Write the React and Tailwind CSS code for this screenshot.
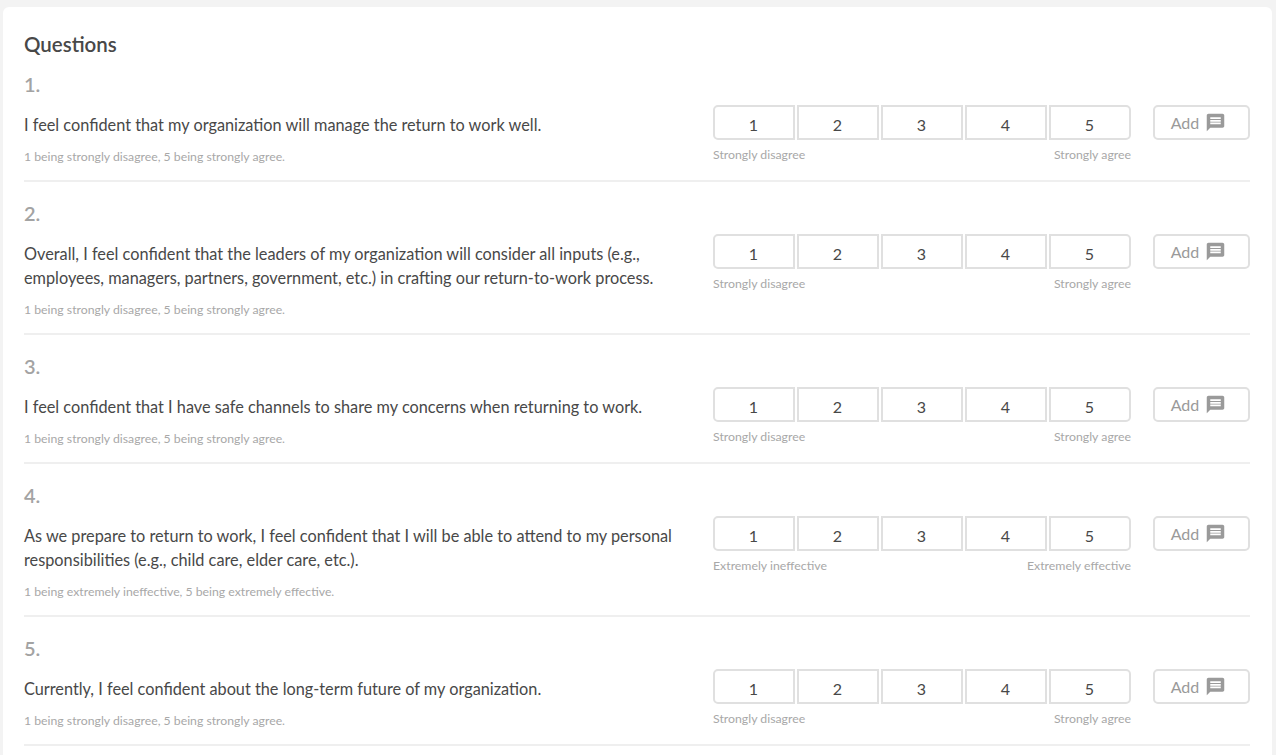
const questions = [
  {
    lines: ["I feel confident that my organization will manage the return to work well."],
    hint: "1 being strongly disagree, 5 being strongly agree.",
    low: "Strongly disagree",
    high: "Strongly agree",
  },
  {
    lines: [
      "Overall, I feel confident that the leaders of my organization will consider all inputs (e.g.,",
      "employees, managers, partners, government, etc.) in crafting our return-to-work process.",
    ],
    hint: "1 being strongly disagree, 5 being strongly agree.",
    low: "Strongly disagree",
    high: "Strongly agree",
  },
  {
    lines: ["I feel confident that I have safe channels to share my concerns when returning to work."],
    hint: "1 being strongly disagree, 5 being strongly agree.",
    low: "Strongly disagree",
    high: "Strongly agree",
  },
  {
    lines: [
      "As we prepare to return to work, I feel confident that I will be able to attend to my personal",
      "responsibilities (e.g., child care, elder care, etc.).",
    ],
    hint: "1 being extremely ineffective, 5 being extremely effective.",
    low: "Extremely ineffective",
    high: "Extremely effective",
  },
  {
    lines: ["Currently, I feel confident about the long-term future of my organization."],
    hint: "1 being strongly disagree, 5 being strongly agree.",
    low: "Strongly disagree",
    high: "Strongly agree",
  },
];

function CommentIcon() {
  return (
    <svg viewBox="0 0 24 24" className="h-[21px] w-[21px] fill-[#9a9a9a]">
      <path d="M20 2H4c-1.1 0-2 .9-2 2v18l4-4h14c1.1 0 2-.9 2-2V4c0-1.1-.9-2-2-2zm-2 12H6v-2h12v2zm0-3H6V9h12v2zm0-3H6V6h12v2z" />
    </svg>
  );
}

function Question({ index, question }) {
  return (
    <div className="border-b-2 border-[#efefef] pb-[14px]">
      <div className="pt-[17px] text-xl leading-[28px] font-semibold text-[#a3a3a3]">{index}.</div>
      <div className="mt-[7px] flex justify-between">
        <div className="w-[680px]">
          <div className="pt-[8px] text-[16.3px] leading-[24px] text-[#484848]">
            {question.lines.map((line) => (
              <div key={line} className="whitespace-nowrap">{line}</div>
            ))}
          </div>
          <div className="mt-[11px] text-[12.25px] leading-[18px] text-[#a8a8a8]">{question.hint}</div>
        </div>
        <div className="flex gap-[22px]">
          <div className="w-[418px]">
            <div className="flex gap-[2px]">
              {[1, 2, 3, 4, 5].map((n) => (
                <div
                  key={n}
                  className="flex h-[35px] flex-1 items-center justify-center border-2 border-[#e0e0e0] pt-[5px] pr-[1px] text-base text-[#484848] first:rounded-l-[5px] last:rounded-r-[5px]"
                >
                  {n}
                </div>
              ))}
            </div>
            <div className="mt-[6px] flex justify-between text-[12.3px] leading-[18px] text-[#a8a8a8]">
              <span>{question.low}</span>
              <span>{question.high}</span>
            </div>
          </div>
          <div className="flex h-[35px] w-[97px] items-center justify-center gap-[6px] rounded-[5px] border-2 border-[#e0e0e0] pr-[6px] text-base text-[#9a9a9a]">
            Add
            <CommentIcon />
          </div>
        </div>
      </div>
    </div>
  );
}

export default function App() {
  return (
    <div className="h-[755px] overflow-hidden bg-[#f3f3f3] pt-[7px] pr-[4px] pl-[3px] font-['Lato',sans-serif]">
      <div className="h-full rounded-t-[6px] bg-white pt-[23px] pr-[22px] pl-[21px]">
        <h1 className="text-[20.5px] leading-[28px] font-semibold text-[#484848]">Questions</h1>
        <div className="-mt-[5px]">
          {questions.map((q, i) => (
            <Question key={i} index={i + 1} question={q} />
          ))}
        </div>
      </div>
    </div>
  );
}
